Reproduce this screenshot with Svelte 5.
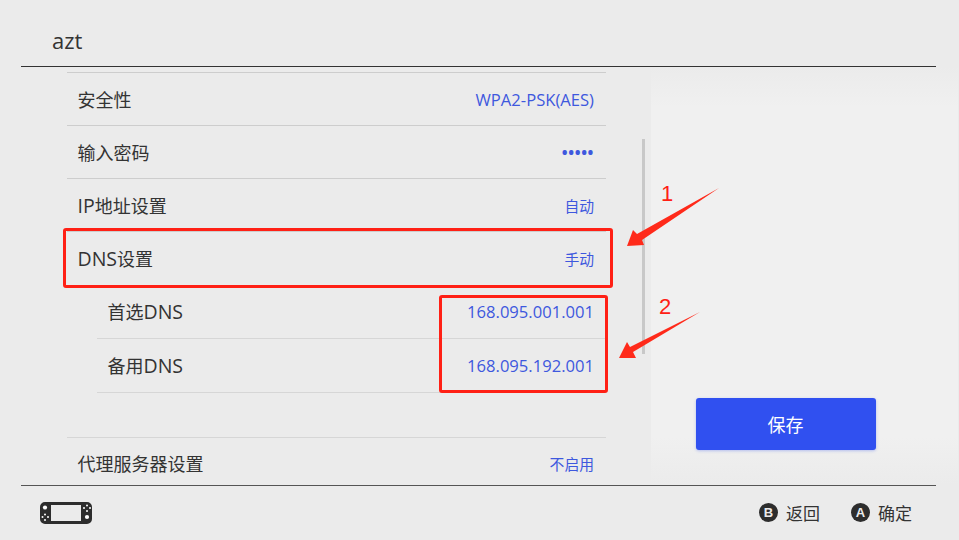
<script lang="ts">
	// parts flagged "en" get the larger latin size, the CJK glyphs stay smaller
	const rows = [
		{ label: [['安全性']], value: [['WPA2-PSK(AES)', 'en']] },
		{ label: [['输入密码']], value: [['•••••', 'dots']] },
		{ label: [['IP', 'en'], ['地址设置']], value: [['自动']] },
		{ label: [['DNS', 'en'], ['设置']], value: [['手动']] },
		{ label: [['首选'], ['DNS', 'en']], value: [['168.095.001.001', 'en']], sub: true },
		{ label: [['备用'], ['DNS', 'en']], value: [['168.095.192.001', 'en']], sub: true },
		{ label: [['代理服务器设置']], value: [['不启用']], proxy: true },
	];
</script>

<div class="page">
	<header>azt</header>

	<main>
		<div class="list">
			{#each rows as row}
				<div class="row" class:sub={row.sub} class:proxy={row.proxy}>
					<span class="label">
						{#each row.label as [text, kind]}<span class={kind}>{text}</span>{/each}
					</span>
					<span class="value">
						{#each row.value as [text, kind]}<span class={kind}>{text}</span>{/each}
					</span>
				</div>
			{/each}
		</div>
		<aside>
			<button>保存</button>
		</aside>
		<div class="scrollbar"></div>
	</main>

	<footer>
		<svg class="console" viewBox="0 0 52 22" width="52" height="22">
			<path
				fill-rule="evenodd"
				d="M5 0H47a5 5 0 0 1 5 5V17a5 5 0 0 1-5 5H5a5 5 0 0 1-5-5V5a5 5 0 0 1 5-5ZM11 3V19H41V3Z"
				fill="#2d2d2d"
			/>
			<g fill="#fff">
				<circle cx="5" cy="5.5" r="2.1" />
				<circle cx="47" cy="15" r="2.1" />
				<circle cx="5" cy="12.5" r="1" />
				<circle cx="8" cy="15" r="1" />
				<circle cx="2.5" cy="15" r="1" />
				<circle cx="5" cy="18" r="1" />
				<circle cx="47" cy="3.5" r="1" />
				<circle cx="44" cy="6" r="1" />
				<circle cx="50" cy="6" r="1" />
				<circle cx="47" cy="9" r="1" />
			</g>
		</svg>
		<div class="hints">
			<span class="hint"><i>B</i>返回</span>
			<span class="hint"><i>A</i>确定</span>
		</div>
	</footer>

	<div class="box box-dns"></div>
	<div class="box box-values"></div>
	<span class="num num-1">1</span>
	<span class="num num-2">2</span>
	<svg class="arrows" viewBox="0 0 959 540" width="959" height="540">
		<polygon points="719,188 642,240 644,245 627,246 633,230 637,234" fill="#ff2a1a" />
		<polygon points="700,312 633,352 636,358 619,358 627,342 630,347" fill="#ff2a1a" />
	</svg>
</div>

<style>
	:global(body) {
		background: #ebebeb;
	}
	.page {
		position: relative;
		display: flex;
		flex-direction: column;
		width: 959px;
		height: 540px;
		overflow: hidden;
		background: #ebebeb;
		color: #333;
		font-family: 'Open Sans', 'Noto Sans CJK SC', sans-serif;
	}
	header {
		flex: none;
		height: 66px;
		margin: 0 23px 0 21px;
		padding-left: 31px;
		border-bottom: 1px solid #333;
		font-size: 22px;
		line-height: 81px;
		box-sizing: content-box;
	}
	main {
		position: relative;
		flex: none;
		display: flex;
		height: 418px;
		overflow: hidden;
	}
	.list {
		flex: none;
		width: 539px;
		margin-left: 67px;
		padding-top: 5px;
	}
	.row {
		display: flex;
		justify-content: space-between;
		align-items: center;
		box-sizing: border-box;
		height: 53px;
		padding: 0 12px 0 10.5px;
		border-top: 1px solid #cdcdcd;
	}
	.row:nth-child(4) {
		height: 54px;
	}
	.row.sub {
		height: 54px;
		margin-left: 30px;
		padding-left: 10.5px;
		border-top: none;
		border-bottom: 1px solid #d6d6d6;
	}
	.row.proxy {
		margin-top: 44px;
		padding-bottom: 2px;
		border-top-color: #d6d6d6;
	}
	.label {
		font-size: 18px;
	}
	.label .en {
		font-size: 19.5px;
	}
	.value {
		font-size: 14.8px;
		color: #3e58de;
	}
	.value .en {
		font-size: 16.6px;
	}
	.value .dots {
		font-size: 15.5px;
		font-weight: 700;
		letter-spacing: 0.6px;
	}
	aside {
		flex: none;
		display: flex;
		align-items: flex-start;
		justify-content: center;
		box-sizing: border-box;
		width: 307px;
		margin-left: 45px;
		padding: 331px 83px 0 45px;
		background: linear-gradient(#ebebeb, #f0f0f0 40px, #f0f0f0 370px, #ebebeb);
	}
	button {
		flex: none;
		width: 180px;
		height: 52px;
		border: none;
		border-radius: 3px;
		background: #3050f0;
		box-shadow: 0 1px 3px rgba(48, 80, 240, 0.3);
		color: #fff;
		font: inherit;
		font-size: 18px;
	}
	.scrollbar {
		position: absolute;
		left: 642px;
		top: 72px;
		width: 3px;
		height: 215px;
		background: #c8c8c8;
	}
	footer {
		flex: none;
		display: flex;
		justify-content: space-between;
		align-items: center;
		height: 54px;
		margin: 0 23px 0 21px;
		padding: 0 24px 0 19px;
		border-top: 1px solid #555;
		box-sizing: border-box;
	}
	.console {
		display: block;
	}
	.hints {
		display: flex;
		gap: 31px;
	}
	.hint {
		display: flex;
		align-items: center;
		gap: 8px;
		font-size: 17px;
	}
	.hint i {
		display: flex;
		align-items: center;
		justify-content: center;
		width: 19px;
		height: 19px;
		border-radius: 50%;
		background: #2d2d2d;
		color: #ebebeb;
		font-family: 'Liberation Sans', sans-serif;
		font-size: 13px;
		font-style: normal;
		font-weight: 700;
	}
	.box {
		position: absolute;
		box-sizing: border-box;
		border: 3px solid #ff2015;
		border-radius: 3px;
	}
	.box-dns {
		left: 63px;
		top: 228px;
		width: 550px;
		height: 60px;
	}
	.box-values {
		left: 439px;
		top: 295px;
		width: 169px;
		height: 98px;
	}
	.num {
		position: absolute;
		color: #ff2015;
		font-family: 'Liberation Sans', sans-serif;
		font-size: 22px;
		line-height: 24px;
	}
	.num-1 {
		left: 661px;
		top: 182px;
	}
	.num-2 {
		left: 659px;
		top: 295px;
	}
	.arrows {
		position: absolute;
		left: 0;
		top: 0;
		pointer-events: none;
	}
</style>
